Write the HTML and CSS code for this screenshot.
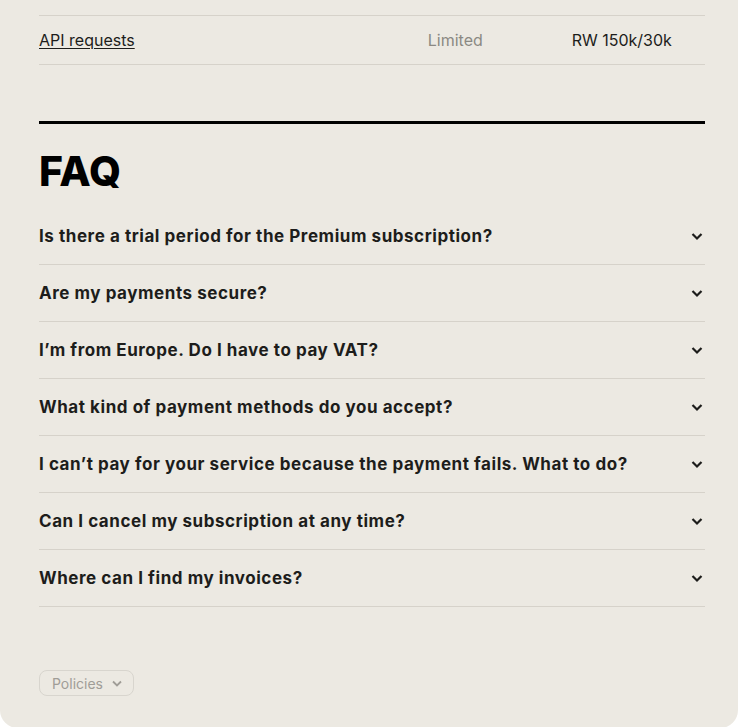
FILE: index.html
```html
<!DOCTYPE html>
<html lang="en">
  <head>
    <meta charset="UTF-8" />
    <meta name="viewport" content="width=device-width, initial-scale=1.0" />
    <title>Pricing FAQ</title>
    <link rel="stylesheet" href="styles.css">
  </head>
  <body>
    <main class="panel">
      <section class="limits">
        <div class="limit-row">
          <a href="#" class="limit-name">API requests</a>
          <span class="limit-value muted">Limited</span>
          <span class="limit-value">RW 150k/30k</span>
        </div>
      </section>

      <section class="faq">
        <h2>FAQ</h2>

        <div class="question">
          <span>Is there a trial period for the Premium subscription?</span>
          <svg class="chevron" width="16" height="16" viewBox="0 0 16 16"><path d="M3.5 6L8 10.5L12.5 6" /></svg>
        </div>
        <div class="question">
          <span>Are my payments secure?</span>
          <svg class="chevron" width="16" height="16" viewBox="0 0 16 16"><path d="M3.5 6L8 10.5L12.5 6" /></svg>
        </div>
        <div class="question">
          <span>I’m from Europe. Do I have to pay VAT?</span>
          <svg class="chevron" width="16" height="16" viewBox="0 0 16 16"><path d="M3.5 6L8 10.5L12.5 6" /></svg>
        </div>
        <div class="question">
          <span>What kind of payment methods do you accept?</span>
          <svg class="chevron" width="16" height="16" viewBox="0 0 16 16"><path d="M3.5 6L8 10.5L12.5 6" /></svg>
        </div>
        <div class="question">
          <span>I can’t pay for your service because the payment fails. What to do?</span>
          <svg class="chevron" width="16" height="16" viewBox="0 0 16 16"><path d="M3.5 6L8 10.5L12.5 6" /></svg>
        </div>
        <div class="question">
          <span>Can I cancel my subscription at any time?</span>
          <svg class="chevron" width="16" height="16" viewBox="0 0 16 16"><path d="M3.5 6L8 10.5L12.5 6" /></svg>
        </div>
        <div class="question">
          <span>Where can I find my invoices?</span>
          <svg class="chevron" width="16" height="16" viewBox="0 0 16 16"><path d="M3.5 6L8 10.5L12.5 6" /></svg>
        </div>
      </section>

      <footer>
        <button type="button" class="policies">
          Policies
          <svg width="12" height="12" viewBox="0 0 12 12"><path d="M2 4.5L6 8.5L10 4.5" /></svg>
        </button>
      </footer>
    </main>
  </body>
</html>
```

FILE: styles.css
```css
body {
  font-family: Inter, "Noto Sans", sans-serif;
  background-color: #fff;
  margin: 0;
  padding: 0;
}

.panel {
  background-color: #ece9e2;
  border-radius: 0 0 18px 18px;
  padding: 15px 33px 32px 39px;
  color: #1d1d1b;
}

.limits {
  border-top: 1px solid #d6d2ca;
}

.limit-row {
  display: grid;
  grid-template-columns: 2fr 1fr 1fr;
  align-items: center;
  height: 48px;
  border-bottom: 1px solid #d6d2ca;
  font-size: 16px;
}

.limit-name {
  color: #1d1d1b;
  text-decoration: underline;
  text-underline-offset: 2px;
}

.limit-value {
  text-align: center;
}

.muted {
  color: #8b8983;
}

.faq {
  margin-top: 56px;
  border-top: 3px solid #000;
}

.faq h2 {
  font-size: 41px;
  line-height: 48px;
  font-weight: 800;
  color: #000;
  margin: 23px 0 13px;
}

.question {
  display: flex;
  align-items: center;
  justify-content: space-between;
  height: 56px;
  border-bottom: 1px solid #d6d2ca;
  font-size: 17px;
  font-weight: 700;
  letter-spacing: 0.55px;
  cursor: pointer;
}

.chevron path {
  fill: none;
  stroke: #1d1d1b;
  stroke-width: 2.2;
}

footer {
  margin-top: 63px;
}

.policies {
  display: flex;
  align-items: center;
  gap: 8px;
  height: 26px;
  padding: 0 10px 0 12px;
  background: transparent;
  border: 1px solid #d8d5ce;
  border-radius: 8px;
  font-family: Inter, "Noto Sans", sans-serif;
  font-size: 14px;
  color: #a09d97;
}

.policies path {
  fill: none;
  stroke: #a09d97;
  stroke-width: 1.8;
}
```
